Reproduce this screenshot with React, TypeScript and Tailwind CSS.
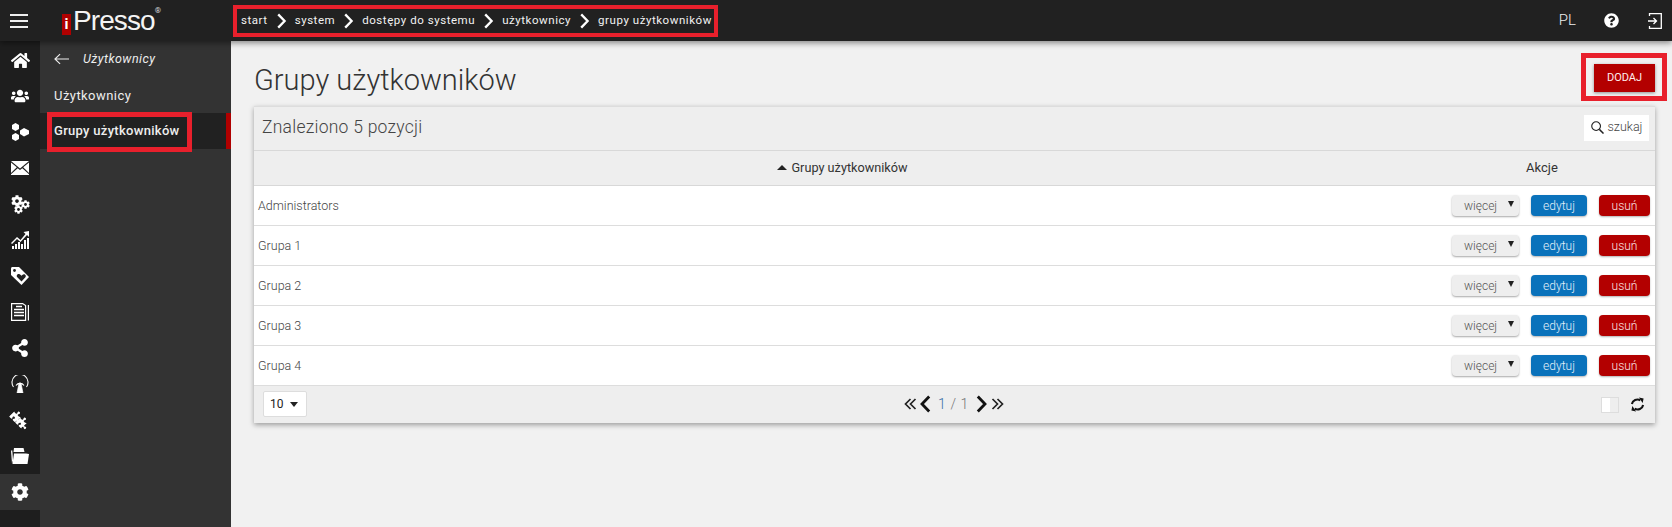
import React from "react";
import { FaHome, FaUsers, FaShareAlt, FaPuzzlePiece, FaCog, FaQuestionCircle } from "react-icons/fa";

const Chevron = ({ className = "", w = 2.6 }: { className?: string; w?: number }) => (
  <svg viewBox="0 0 11 18" className={className} fill="none" stroke="currentColor" strokeWidth={w}>
    <path d="M1.800 1.500 9 9l-7.200 7.500" />
  </svg>
);
const Double = ({ className = "" }: { className?: string }) => (
  <svg viewBox="0 0 13 12" className={className} fill="none" stroke="#222" strokeWidth="1.700">
    <path d="M1 1l5 5-5 5M6 1l5 5-5 5" />
  </svg>
);

const Hex = () => (
  <svg viewBox="0 0 18 18" className="w-[18px] h-[18px]" fill="#fff">
    <path d="M4.500 0 8 2v4L4.500 8 1 6V2z" />
    <path d="M4.500 10 8 12v4l-3.500 2L1 16v-4z" />
    <path d="M13 5l5 2.500v3.500L13 13.500 9 11V7.500z" />
  </svg>
);
const Mail = () => (
  <svg viewBox="0 0 18 14" className="w-[18px] h-[14px]" fill="#fff">
    <path d="M0 0h18l-9 7.500z" />
    <path d="M0 1.500v10.500l5.800-5.700z" />
    <path d="M18 1.500v10.500l-5.800-5.700z" />
    <path d="M0 14h18v-.8l-6.700-6L9 9 6.700 7.200 0 13.200z" />
  </svg>
);
const Cogs = () => (
  <span className="relative block w-[18px] h-[18px]">
    <FaCog size={12} color="#fff" className="absolute left-0 top-0" />
    <FaCog size={9} color="#fff" className="absolute left-[10px] top-[5px]" />
    <FaCog size={9} color="#fff" className="absolute left-[3px] top-[10px]" />
  </span>
);
const Growth = () => (
  <svg viewBox="0 0 18 18" className="w-[18px] h-[18px]" fill="#fff">
    <path d="M18 0v6l-2-2-6.500 7-3.500-3L1 13l-1-1 6-6 3.500 3L14.500 3 12.500 1z" />
    <path d="M1 15h2v3H1zM4 13h2v5H4zM7 11h2v7H7zM10 13h2v5h-2zM13 9h2v9h-2zM16 7h2v11h-2z" />
  </svg>
);
const TagHeart = () => (
  <svg viewBox="0 0 18 18" className="w-[18px] h-[18px]">
    <path fill="#fff" d="M0 1.500C0 .6.600 0 1.500 0H8l10 10-7.500 8L0 8z" />
    <circle cx="3.500" cy="3.500" r="1.400" fill="#212121" />
    <path fill="#212121" d="M10.500 14.500 6.300 10.300c-1.800-2.300 1.500-4.700 3.400-2.300l.8.800.8-.8c2-2 4.800.5 2.900 2.500z" />
  </svg>
);
const News = () => (
  <svg viewBox="0 0 18 18" className="w-[18px] h-[18px]" fill="none" stroke="#fff">
    <path strokeWidth="1.200" d="M.6 17.400V.6h11l3 2v14.800z" />
    <path strokeWidth="1.200" d="M17.400 2v15.500" />
    <path strokeWidth="1.300" d="M5 3.500h6M3 6.500h10M3 9.500h10M3 12.500h10" />
  </svg>
);
const Antenna = () => (
  <svg viewBox="0 0 18 18" className="w-[18px] h-[18px]" fill="none" stroke="#fff">
    <path strokeWidth="1.100" d="M2.500 12a8 8 0 1 1 13 0" />
    <path strokeWidth="1.100" d="M5 10.500a4.800 4.800 0 0 1 8 0" />
    <path fill="#fff" strokeWidth=".6" d="M8 8h2l2 10H6z" />
  </svg>
);
const Puzzle = () => (
  <span className="relative block w-[18px] h-[18px]">
    <FaPuzzlePiece size={12} color="#fff" className="absolute left-0 top-0 rotate-45" />
    <FaPuzzlePiece size={12} color="#fff" className="absolute left-[6px] top-[6px] rotate-45" />
  </span>
);
const Folder = () => (
  <svg viewBox="0 0 18 16" className="w-[18px] h-[16px]" fill="#fff">
    <path d="M1 15.500 0 2.500h1.300l.7 10z" />
    <path d="M3 0h9.500l1 4H2.500z" />
    <path d="M3 5.500h12l3 .5-1.500 10H1.500z" />
  </svg>
);
const Logout = () => (
  <svg viewBox="0 0 14 16" className="w-[14px] h-[16px]" fill="none" stroke="#fff" strokeWidth="1.300">
    <path d="M1.500 3V.7h11.800v14.600H1.500V13" />
    <path d="M0 8h8M5.500 5l3 3-3 3" />
  </svg>
);
const Refresh = () => (
  <svg viewBox="0 0 16 16" className="w-[15px] h-[15px]" fill="none" stroke="#111" strokeWidth="2.200">
    <path d="M2 7.500a6 6 0 0 1 9-4" />
    <path d="M14 8.500a6 6 0 0 1-9 4" />
    <path fill="#111" stroke="none" d="M9.500.500 14.500 1.500l-1 5zM6.500 15.500l-5-1 1-5z" />
  </svg>
);
const Search = () => (
  <svg viewBox="0 0 14 14" className="w-[13px] h-[13px]" fill="none" stroke="#222" strokeWidth="1.200">
    <circle cx="5.500" cy="5.500" r="4.700" />
    <path strokeWidth="1.600" d="m9 9 4.500 4.500" />
  </svg>
);

const rail: React.ReactNode[] = [
  <FaHome size={19} color="#fff" />,
  <FaUsers size={18} color="#fff" />,
  <Hex />,
  <Mail />,
  <Cogs />,
  <Growth />,
  <TagHeart />,
  <News />,
  <FaShareAlt size={18} color="#fff" />,
  <Antenna />,
  <Puzzle />,
  <Folder />,
];

const crumbs = ["start", "system", "dostępy do systemu", "użytkownicy", "grupy użytkowników"];
const groups = ["Administrators", "Grupa 1", "Grupa 2", "Grupa 3", "Grupa 4"];

export default function App() {
  return (
    <div className="w-[1672px] h-[527px] overflow-hidden flex flex-col bg-[#f1f1f1] font-['Roboto',sans-serif] text-[#333]">
      <header className="relative z-10 h-[41px] shrink-0 bg-[#212121] flex items-center text-white shadow-[0_2px_6px_rgba(0,0,0,0.45)]">
        <div className="w-[38px] shrink-0 flex flex-col items-center gap-[4px]">
          <span className="block w-[18px] h-[2px] bg-[#eee]" />
          <span className="block w-[18px] h-[2px] bg-[#eee]" />
          <span className="block w-[18px] h-[2px] bg-[#eee]" />
        </div>
        <div className="w-[195px] shrink-0 flex items-center pl-[24px]">
          <span className="w-[9px] h-[21px] mt-[8px] bg-[#b00000] text-white text-[15px] leading-[21px] text-center font-bold">i</span>
          <span className="font-['Liberation_Sans',sans-serif] text-[28px] leading-[28px] tracking-[-0.9px] ml-[2px] text-[#f4f4f4]">Presso</span>
          <span className="text-[8px] leading-none -mt-[20px] text-[#ddd]">®</span>
        </div>
        <nav className="border-[4px] border-[#e8202c] h-[32px] flex items-center pl-[4px] w-[485px] gap-[8px] text-[11.500px] tracking-[0.55px] text-[#f2f2f2] whitespace-nowrap">
          {crumbs.map((c, i) => (
            <React.Fragment key={c}>
              {i > 0 && <Chevron className="w-[11px] h-[16px] text-white" />}
              <span>{c}</span>
            </React.Fragment>
          ))}
        </nav>
        <div className="ml-auto flex items-center">
          <span className="text-[15px] font-light text-[#eee] mr-[28px]">PL</span>
          <FaQuestionCircle size={15} color="#fff" className="mr-[29px]" />
          <div className="mr-[10px]"><Logout /></div>
        </div>
      </header>

      <div className="flex flex-1 min-h-0">
        <aside className="w-[40px] shrink-0 bg-[#1e1e1e] flex flex-col">
          <div className="h-[1px]" />
          {rail.map((ic, i) => (
            <div key={i} className="h-[36px] flex items-center justify-center">{ic}</div>
          ))}
          <div className="h-[36px] bg-[#333] flex items-center justify-center">
            <FaCog size={18} color="#fff" />
          </div>
        </aside>

        <aside className="w-[191px] shrink-0 bg-[#333] text-[13px] tracking-[0.45px] text-[#eee]">
          <div className="h-[36px] flex items-center pl-[14px]">
            <svg viewBox="0 0 16 12" className="w-[15px] h-[12px] mr-[14px]" fill="none" stroke="#eee" strokeWidth="1.200">
              <path d="M16 6H1M6.500.7 1 6l5.500 5.300" />
            </svg>
            <span className="italic text-[12.500px]">Użytkownicy</span>
          </div>
          <div className="h-[36px] pt-[1px] flex items-center pl-[14px]">Użytkownicy</div>
          <div className="relative h-[36px] bg-[#212121] flex items-center pl-[14px] font-medium tracking-[0.3px] border-r-[5px] border-[#b00000]">
            Grupy użytkowników
            <div className="absolute left-[7px] top-[-1px] w-[145px] h-[40px] border-[5px] border-[#e8202c]" />
          </div>
        </aside>

        <main className="flex-1 min-w-0 pl-[23px] pr-[17px]">
          <div className="flex items-start justify-between h-[65px] pt-[12px]">
            <h1 className="text-[29px] leading-[36px] font-light text-[#333] mt-[9px]">Grupy użytkowników</h1>
            <div className="border-[5px] border-[#e8202c] pl-[8px] pr-[7px] pt-[6px] pb-[4px] mr-[-12px]">
              <button className="block w-[61px] h-[28px] bg-[#b30000] text-[#ffecec] text-[11px] font-normal shadow-[0_1px_3px_rgba(0,0,0,0.4)]">DODAJ</button>
            </div>
          </div>

          <section className="border-t border-[#ddd] shadow-[0_2px_5px_rgba(0,0,0,0.35)]">
            <div className="h-[44px] bg-[#eeeeee] border-b border-[#d8d8d8] flex items-center justify-between pl-[8px] pr-[6px] pb-[2px]">
              <span className="text-[17.500px] font-light text-[#444] tracking-[0.25px] -mt-[1px]">Znaleziono 5 pozycji</span>
              <div className="w-[65px] h-[26px] bg-white flex items-center justify-center gap-[4px] text-[12.500px] font-light text-[#444]">
                <Search />szukaj
              </div>
            </div>
            <div className="h-[35px] bg-[#eeeeee] border-b border-[#d8d8d8] flex items-center text-[13px] text-[#333]">
              <div className="flex-1 flex justify-center items-center gap-[4px] pl-[19px]">
                <span className="w-0 h-0 border-x-[5px] border-x-transparent border-b-[5px] border-b-[#222]" />
                <span className="text-[12.700px] font-normal">Grupy użytkowników</span>
              </div>
              <div className="w-[243px] text-center text-[13px] pl-[17px]">Akcje</div>
            </div>
            {groups.map((g) => (
              <div key={g} className="h-[40px] bg-white border-b border-[#ddd] last:border-b-2 flex items-center pl-[4px] pr-[5px] text-[12.500px] font-light text-[#444]">
                <span className="flex-1 pt-[1px]">{g}</span>
                <button className="w-[67px] h-[21px] rounded-[4px] bg-[#eeeeee] shadow-[0_1px_2px_rgba(0,0,0,0.35)] flex items-center pl-[12px] text-[12px] font-light text-[#555]">
                  więcej<span className="w-0 h-0 ml-[11px] -mt-[3px] border-x-[3.500px] border-x-transparent border-t-[6px] border-t-[#222]" />
                </button>
                <button className="ml-[12px] w-[56px] h-[21px] rounded-[4px] bg-[#0a72bb] shadow-[0_1px_2px_rgba(0,0,0,0.3)] text-[12px] font-light text-[#e6f1f9]">edytuj</button>
                <button className="ml-[12px] w-[51px] h-[21px] rounded-[4px] bg-[#b30000] shadow-[0_1px_2px_rgba(0,0,0,0.3)] text-[12px] font-light text-[#f9e6e6]">usuń</button>
              </div>
            ))}
            <div className="relative h-[37px] bg-[#eeeeee] flex items-center justify-between pl-[9px] pr-[10px]">
              <div className="w-[44px] h-[26px] bg-white border border-[#ddd] rounded-[2px] flex items-center justify-between pl-[6px] pr-[8px] text-[12px] text-[#222] -mt-[1px]">
                10<span className="w-0 h-0 border-x-[4px] border-x-transparent border-t-[5px] border-t-[#222]" />
              </div>
              <div className="absolute left-[649px] top-[5px] flex items-center h-[26px] text-[#222]">
                <Double className="w-[14px] h-[12px] rotate-180" />
                <Chevron w={2.8} className="w-[13px] h-[18px] rotate-180 text-[#111] ml-[2px]" />
                <span className="text-[14px] font-light tracking-[0.6px] ml-[6px] mr-[6px] text-[#777] whitespace-nowrap"><span className="text-[#3a6ea5]">1</span> / 1</span>
                <Chevron w={2.8} className="w-[13px] h-[18px] text-[#111]" />
                <Double className="w-[14px] h-[12px] ml-[3px]" />
              </div>
              <div className="flex items-center gap-[11px]">
                <div className="w-[18px] h-[16px] border border-[#ddd] flex">
                  <span className="w-1/2 bg-white" />
                  <span className="w-1/2 bg-[#eeeeee]" />
                </div>
                <Refresh />
              </div>
            </div>
          </section>
        </main>
      </div>
    </div>
  );
}
